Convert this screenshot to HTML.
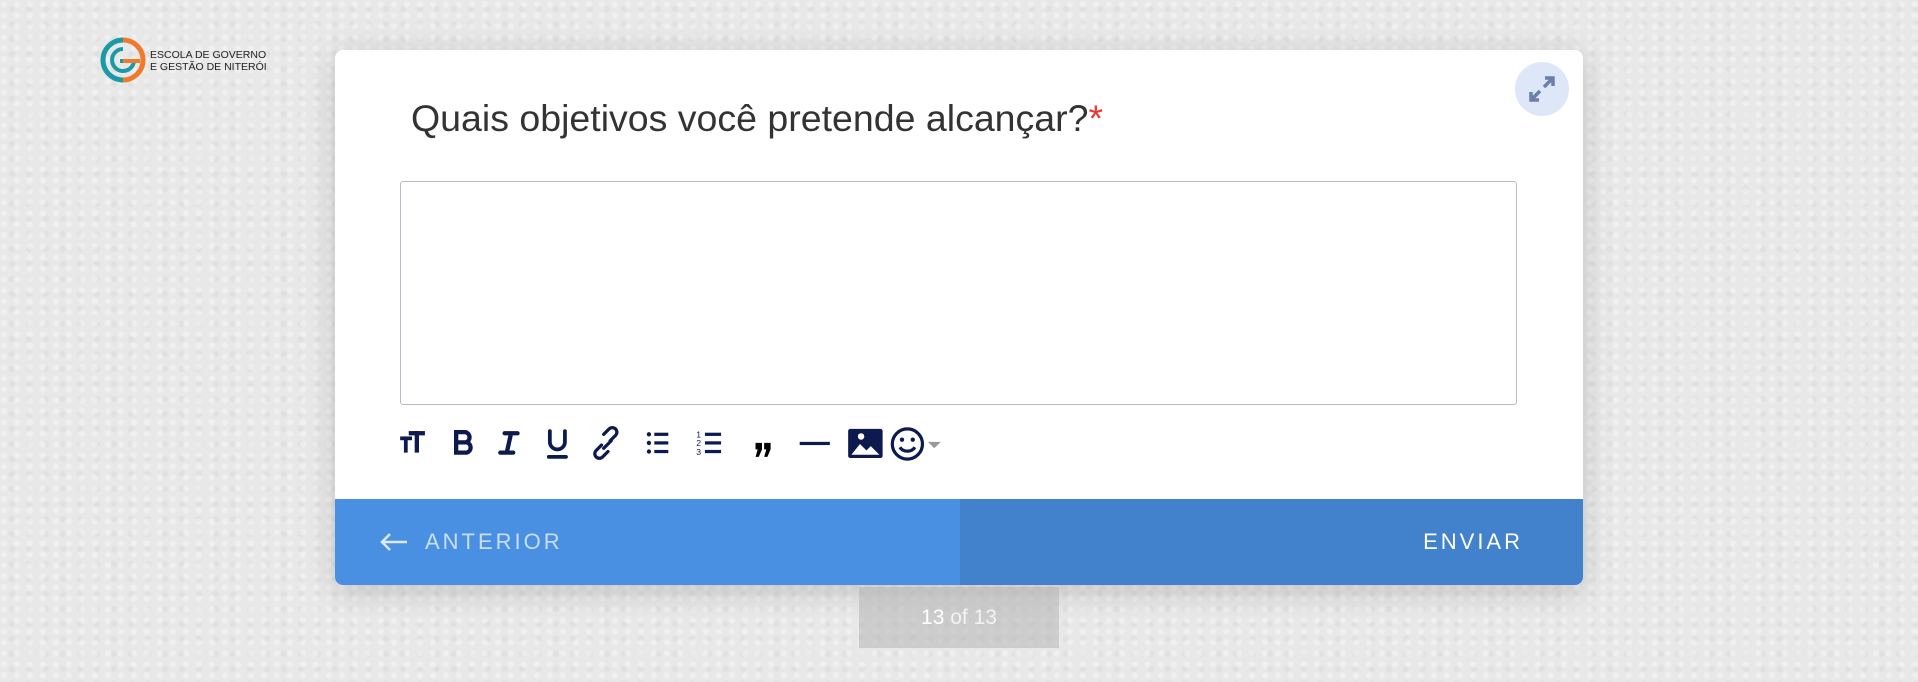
<!DOCTYPE html>
<html><head><meta charset="utf-8"><style>
body{margin:0;width:1918px;height:682px;overflow:hidden;background:#e8e8e8;font-family:"Liberation Sans",sans-serif;position:relative;
background-image:radial-gradient(circle at 30% 40%,rgba(255,255,255,.35) 0 2px,transparent 4px),radial-gradient(circle at 70% 60%,rgba(0,0,0,.035) 0 2px,transparent 4px);background-size:13px 11px,17px 15px;}
.card{position:absolute;left:335px;top:50px;width:1248px;height:535px;background:#fff;border-radius:8px;box-shadow:0 6px 30px rgba(0,0,0,.18);overflow:hidden}
.title{position:absolute;left:76px;top:47px;font-size:37.5px;color:#333}
.title span{color:#e53935}
.ta{position:absolute;left:65px;top:131px;width:1115px;height:222px;border:1px solid #b8bcc8;border-radius:3px}
.foot{position:absolute;left:0;top:449px;width:1248px;height:86px}
.l{position:absolute;left:0;top:0;width:625px;height:86px;background:#4a90e2;color:rgba(255,255,255,.7);font-size:22px;letter-spacing:3px;line-height:86px}
.r{position:absolute;left:625px;top:0;width:623px;height:86px;background:#4281cc;color:#fff;font-size:22px;letter-spacing:3px;line-height:86px;text-align:right}
.exp{position:absolute;left:1180px;top:12px;width:54px;height:54px;border-radius:50%;background:#dde7f8}
.pager{position:absolute;left:859px;top:587px;width:200px;height:61px;background:rgba(180,180,180,.55);color:rgba(255,255,255,.75);font-size:21px;text-align:center;line-height:61px}
</style></head><body>
<div style="position:absolute;left:100px;top:37px;width:170px;height:46px">
<svg width="46" height="46" viewBox="0 0 46 46"><path d="M23 3A20 20 0 0 0 23 43" stroke="#1a9aa6" stroke-width="5" fill="none"/><path d="M23 3A20 20 0 0 1 23 43" stroke="#ef7a2c" stroke-width="5" fill="none"/><path d="M23 12A11 11 0 1 0 34 24H20" stroke="#1a9aa6" stroke-width="4" fill="none"/><path d="M23 24H40" stroke="#ef7a2c" stroke-width="4"/></svg>
<div style="position:absolute;left:50px;top:12px;font-size:10.5px;line-height:12px;color:#222;white-space:nowrap">ESCOLA DE GOVERNO<br>E GESTÃO DE NITERÓI</div></div>
<div class="card">
<div class="title">Quais objetivos você pretende alcançar?<span>*</span></div>
<div class="exp"><svg width="54" height="54" viewBox="0 0 54 54" fill="none" stroke="#6b7fa8" stroke-width="3.5"><path d="M29 25L38 16M30 16H38V24M25 29L16 38M16 30V38H24"/></svg></div>
<div class="ta"></div>
<svg style="position:absolute;left:63px;top:374px" width="560" height="40" viewBox="0 0 520 36" fill="#0d1a4e" stroke="#0d1a4e">
<g stroke="none"><rect x="2" y="11" width="11" height="3.5"/><rect x="5.5" y="11" width="3.5" height="15"/><rect x="10" y="6" width="15" height="4"/><rect x="15.5" y="6" width="4" height="20"/></g>
<path d="M54 7h9a5 5 0 0 1 0 9.5h-9zM54 16.5h10a5 5 0 0 1 0 9.5h-10z" fill="none" stroke-width="4"/>
<path d="M99 8h12M95 26h12M105 8l-4 18" fill="none" stroke-width="4" stroke-linecap="round"/>
<path d="M141 6v10a7 7 0 0 0 14 0V6M140 30h16" fill="none" stroke-width="3.5" stroke-linecap="round"/>
<path d="M189 19l-5 5a4 4 0 0 0 6 6l5-5M197 15l5-5a4 4 0 0 0-6-6l-5 5M191 22l7-7" fill="none" stroke-width="3" stroke-linecap="round"/>
<g stroke="none"><circle cx="233" cy="9" r="2"/><circle cx="233" cy="17" r="2"/><circle cx="233" cy="25" r="2"/><rect x="238" y="7.5" width="13" height="3"/><rect x="238" y="15.5" width="13" height="3"/><rect x="238" y="23.5" width="13" height="3"/>
<rect x="285" y="7.5" width="15" height="3"/><rect x="285" y="15.5" width="15" height="3"/><rect x="285" y="23.5" width="15" height="3"/>
<text x="277" y="12" font-size="8" font-family="Liberation Sans">1</text><text x="277" y="20" font-size="8" font-family="Liberation Sans">2</text><text x="277" y="28" font-size="8" font-family="Liberation Sans">3</text>
<path d="M332 17h6v6l-3 7h-3l2-7h-2zM340 17h6v6l-3 7h-3l2-7h-2z" fill="#000"/>
<rect x="373" y="16" width="28" height="3"/>
<rect x="418" y="4" width="32" height="27" rx="2"/></g>
<path d="M421 28l8-10 6 6 4-4 8 8z" fill="#fff" stroke="none"/><circle cx="430" cy="11" r="3" fill="#fff" stroke="none"/>
<circle cx="473" cy="18" r="14" fill="none" stroke-width="3"/><circle cx="468" cy="14" r="2" stroke="none"/><circle cx="478" cy="14" r="2" stroke="none"/><path d="M466 21a8 7 0 0 0 14 0" fill="none" stroke-width="3"/>
<path d="M492 16h12l-6 6z" fill="#999" stroke="none"/>
</svg>
<div class="foot"><div class="l"><svg style="position:absolute;left:44px;top:32px" width="30" height="22" viewBox="0 0 30 22" fill="none" stroke="rgba(255,255,255,.8)" stroke-width="2.5"><path d="M28 11H3M11 3L3 11L11 19"/></svg><span style="position:absolute;left:90px">ANTERIOR</span></div><div class="r"><span style="margin-right:60px">ENVIAR</span></div></div>
</div>
<div class="pager"><b style="color:#fff;font-weight:normal">13</b> of 13</div>
</body></html>
